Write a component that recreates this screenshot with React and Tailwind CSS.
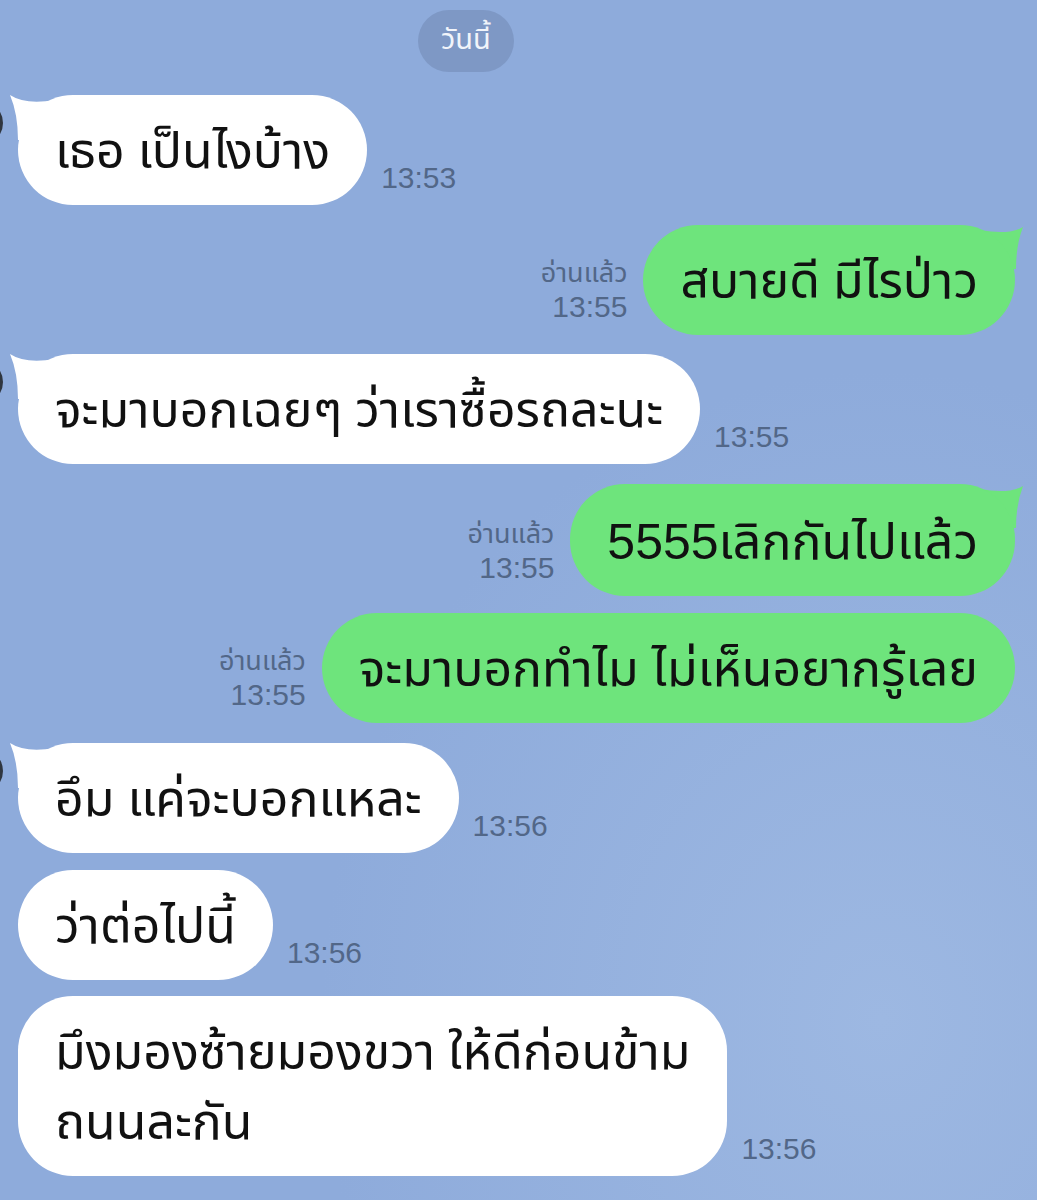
import React from 'react';

const thai = { fontFamily: '"Noto Sans Thai", "Noto Sans", "DejaVu Sans", sans-serif' };

const messages = [
    { id: 1, side: 'in', text: 'เธอ เป็นไงบ้าง', time: '13:53', tail: true, mt: 'mt-[23px]' },
    { id: 2, side: 'out', text: 'สบายดี มีไรป่าว', time: '13:55', tail: true, mt: 'mt-[20px]' },
    { id: 3, side: 'in', text: 'จะมาบอกเฉยๆ ว่าเราซื้อรถละนะ', time: '13:55', tail: true, mt: 'mt-[19px]' },
    { id: 4, side: 'out', digits: '5555', text: 'เลิกกันไปแล้ว', time: '13:55', tail: true, mt: 'mt-[20px]' },
    { id: 5, side: 'out', text: 'จะมาบอกทำไม ไม่เห็นอยากรู้เลย', time: '13:55', tail: false, mt: 'mt-[17px]' },
    { id: 6, side: 'in', text: 'อึม แค่จะบอกแหละ', time: '13:56', tail: true, mt: 'mt-[20px]' },
    { id: 7, side: 'in', text: 'ว่าต่อไปนี้', time: '13:56', tail: false, mt: 'mt-[17px]' },
    { id: 8, side: 'in', lines: ['มึงมองซ้ายมองขวา ให้ดีก่อนข้าม', 'ถนนละกัน'], time: '13:56', tail: false, mt: 'mt-[16px]' },
];

const TailLeft = () => (
    <svg className="absolute left-[-9px] top-[-1px]" width="46" height="46" viewBox="0 0 46 46">
        <path d="M1 1 Q 16 11 46 6 L 46 46 L 9 46 Q 9 20 1 1 Z" fill="#ffffff" />
    </svg>
);

const TailRight = () => (
    <svg className="absolute right-[-9px] top-0" width="44" height="44" viewBox="0 0 44 44">
        <path d="M43 2 Q 30 10 0 5 L 0 44 L 36 44 Q 36 20 43 2 Z" fill="#6ee47c" />
    </svg>
);

const Avatar = ({ show }) => (
    <div className={`w-[44px] h-[44px] shrink-0 -ml-[41px] mr-[15px] self-start mt-[6px] rounded-full ${show ? 'border-[3px] border-[#2f3640] bg-[#dfe6f0]' : ''}`}></div>
);

const Incoming = ({ m }) => (
    <div className={`flex items-end ${m.mt}`}>
        <Avatar show={m.tail} />
        <div className="relative">
            {m.tail && <TailLeft />}
            <div className="relative bg-white rounded-[55px] px-[37px] pt-[23px] pb-[17px] text-[50px] leading-[70px] text-[#111] whitespace-nowrap" style={thai}>
                {m.lines ? m.lines.map((l, i) => <div key={i}>{l}</div>) : m.text}
            </div>
        </div>
        <div className="ml-[14px] mb-[12px] text-[30px] leading-[30px] text-[#526788] font-['Liberation_Sans',sans-serif]">
            {m.time}
        </div>
    </div>
);

const Outgoing = ({ m }) => (
    <div className={`flex items-end justify-end pr-[22px] ${m.mt}`}>
        <div className="mr-[16px] mb-[14px] flex flex-col items-end gap-[6px] text-[#526788]">
            <div className="text-[27px] leading-[27px]" style={thai}>อ่านแล้ว</div>
            <div className="text-[30px] leading-[28px] font-['Liberation_Sans',sans-serif]">{m.time}</div>
        </div>
        <div className="relative">
            {m.tail && <TailRight />}
            <div className="relative bg-[#6ee47c] rounded-[55px] px-[37px] pt-[23px] pb-[17px] text-[50px] leading-[70px] text-[#111] whitespace-nowrap" style={thai}>
                {m.digits && <span className="font-['Liberation_Sans_Narrow','Liberation_Sans',sans-serif]">{m.digits}</span>}
                {m.text}
            </div>
        </div>
    </div>
);

export default function App() {
    return (
        <div className="w-[1037px] h-[1200px] overflow-hidden bg-[#8eabdb] bg-[radial-gradient(ellipse_at_85%_85%,#9db8e2_0%,#8eabdb_45%)] flex flex-col select-none">
            {/* Date */}
            <div className="flex pl-[418px] pt-[10px]">
                <div className="h-[62px] px-[23px] rounded-full bg-[#7e98c5] flex items-center text-[29px] text-[#f1f4fa]" style={thai}>
                    วันนี้
                </div>
            </div>

            {messages.map((m) => (
                m.side === 'in' ? <Incoming key={m.id} m={m} /> : <Outgoing key={m.id} m={m} />
            ))}
        </div>
    );
}
